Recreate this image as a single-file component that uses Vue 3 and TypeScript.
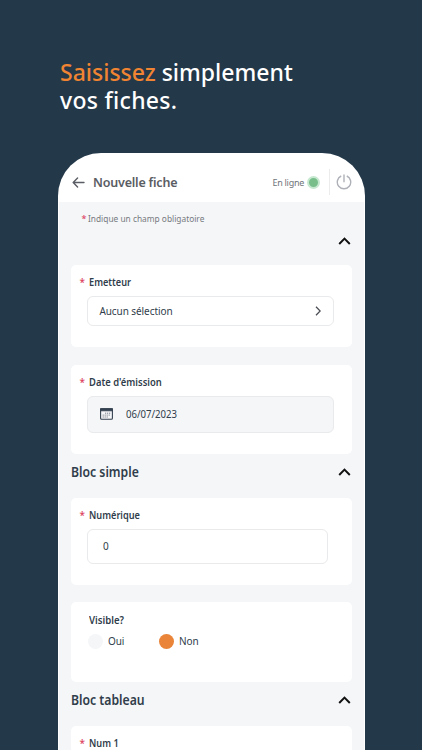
<script setup lang="ts">
import { ref } from 'vue'

const date = ref<string>('06/07/2023')
const amount = ref<number>(0)
const visible = ref<'Oui' | 'Non'>('Non')
const choices: Array<'Oui' | 'Non'> = ['Oui', 'Non']
</script>

<template>
  <main class="screen">
    <h1 class="headline"><span class="accent">Saisissez</span> simplement <span class="second">vos fiches.</span></h1>

    <div class="phone">
      <header class="topbar">
        <svg class="back" viewBox="0 0 14 12"><path d="M6 1 1.2 6 6 11M1.5 6H13" /></svg>
        <span class="title">Nouvelle fiche</span>
        <span class="status">En ligne</span>
        <i class="dot"></i>
        <span class="power">
          <svg viewBox="0 0 16 16"><path d="M5.2 2a6.7 6.7 0 1 0 5.6 0M8 .5v7.8" /></svg>
        </span>
      </header>

      <div class="content">
        <p class="hint"><b>*</b> <span>Indique un champ obligatoire</span></p>
        <div class="section first"><svg class="caret" viewBox="0 0 13 8"><path d="M1.2 7 6.5 1.6 11.8 7" /></svg></div>

        <section class="card emitter">
          <div class="label"><b>*</b><span>Emetteur</span></div>
          <div class="field select">
            <span class="placeholder">Aucun sélection</span>
            <svg class="chevron" viewBox="0 0 6 10"><path d="M1 .8 5.2 5 1 9.2" /></svg>
          </div>
        </section>

        <section class="card issue">
          <div class="label"><b>*</b><span class="l-date">Date d'émission</span></div>
          <div class="field date">
            <svg class="calendar" viewBox="0 0 13 12">
              <rect x=".6" y=".8" width="11.8" height="10.4" rx="1" />
              <path class="band" d="M.6.8h11.8v1.9H.6z" />
              <path class="days" d="M5 5.2h5.5M2.6 7.1h7.9M2.6 9h5.8" />
            </svg>
            <span class="day">{{ date }}</span>
          </div>
        </section>

        <div class="section"><h2>Bloc simple</h2><svg class="caret" viewBox="0 0 13 8"><path d="M1.2 7 6.5 1.6 11.8 7" /></svg></div>

        <section class="card numeric">
          <div class="label"><b>*</b><span>Numérique</span></div>
          <div class="field number">{{ amount }}</div>
        </section>

        <section class="card visible">
          <div class="label"><b></b><span class="l-vis">Visible?</span></div>
          <div class="choices">
            <button v-for="c in choices" :key="c" class="choice" :class="{ on: visible === c }" @click="visible = c">
              <i></i><span>{{ c }}</span>
            </button>
          </div>
        </section>

        <div class="section"><h2>Bloc tableau</h2><svg class="caret" viewBox="0 0 13 8"><path d="M1.2 7 6.5 1.6 11.8 7" /></svg></div>

        <section class="card table">
          <div class="label"><b>*</b><span>Num 1</span></div>
        </section>
      </div>
    </div>
  </main>
</template>

<style>
body { background: #233849; overflow: hidden; }
</style>

<style scoped>
* { box-sizing: border-box; }
.screen {
  height: 750px;
  overflow: hidden;
  background: #233849;
  font-family: "Noto Sans", "Open Sans", sans-serif;
  color: #303d4b;
  white-space: nowrap;
}
.headline {
  margin: 0;
  padding: 58px 0 0 60px;
  width: 310px;
  height: 153px;
  color: #fff;
  font-size: 23px;
  line-height: 28px;
  font-weight: 500;
  white-space: normal;
}
.accent { color: #f08432; }
.second { letter-spacing: .3px; }
.phone {
  width: 307px;
  height: 640px;
  margin-left: 58px;
  overflow: hidden;
  border-radius: 43px 43px 0 0;
  background: #fff;
}
.topbar {
  display: flex;
  align-items: center;
  height: 49px;
  padding: 9px 13px 0 14px;
}
svg { display: block; flex: none; fill: none; stroke: currentColor; }
.back { width: 13px; height: 11px; stroke-width: 1.5; stroke-linecap: round; stroke-linejoin: round; color: #5a5d63; }
.title { margin-left: 8px; font-size: 12.5px; font-weight: 600; letter-spacing: -.2px; color: #5a5d63; }
.status { margin-left: auto; font-size: 9px; letter-spacing: -.28px; color: #70747a; }
.dot { width: 13px; height: 13px; margin: 0 9px 0 3px; border: 2px solid #c6e8cf; border-radius: 50%; background: #78be8b; }
.power { display: flex; align-items: center; height: 26px; padding-left: 6px; border-left: 1px solid #ececee; }
.power svg { width: 16px; height: 16px; color: #aeb1b8; stroke-width: 1.4; }
.content { height: 591px; margin: 0 1px; padding: 0 12px 0 11.5px; background: #f5f6f8; }
.hint { display: flex; gap: 2px; margin: 0; padding: 10px 0 0 11px; height: 28px; font-size: 9px; line-height: 14px; color: #777a80; }
.hint span { transform: scaleX(.927); transform-origin: 0 50%; }
b { color: #dc4260; font-weight: 500; }
.section { display: flex; align-items: center; justify-content: space-between; height: 44px; padding: 0 1.5px 9px 0; }
.section.first { justify-content: flex-end; height: 35px; padding: 0 1.5px 15px 0; }
.caret { width: 13px; height: 8px; margin-top: 1px; color: #111; stroke-width: 2; }
h2 { margin: 0; font-size: 13.5px; line-height: 18px; font-weight: 600; transform: scaleX(.905); transform-origin: 0 50%; }
.card { width: 281px; padding: 10px 0 0 9px; border-radius: 5px; background: #fff; }
.emitter { height: 82px; margin-bottom: 18px; }
.issue { height: 89px; }
.numeric { height: 87px; margin-bottom: 17px; }
.visible { height: 80px; }
.table { height: 90px; }
.label { display: flex; height: 15px; font-size: 10px; line-height: 15px; font-weight: 600; }
.label b { width: 9.8px; font-size: 10px; }
.label span { transform: scaleX(.92); transform-origin: 0 50%; }
.label .l-date { transform: scaleX(.94); }
.label .l-vis { padding-top: 1px; transform: scaleX(.96); }
.field { display: flex; align-items: center; margin: 6px 0 0 7.9px; width: 247px; border: 1px solid #e9eaec; border-radius: 6px; font-size: 10px; }
.select { height: 30px; padding: 0 12px 0 11px; justify-content: space-between; }
.placeholder { letter-spacing: -.07px; }
.chevron { width: 6px; height: 10px; color: #4a4d53; stroke-width: 1.3; }
.date { height: 37px; padding: 0 0 1px 12px; background: #f5f6f8; }
.calendar { width: 13px; height: 12px; color: #354250; stroke-width: 1.1; }
.calendar .band { fill: currentColor; }
.calendar .days { stroke-dasharray: 1.2 .8; stroke-width: 1; opacity: .65; }
.day { margin-left: 13px; transform: scaleX(.96); transform-origin: 0 50%; }
.number { width: 241px; height: 35px; padding: 0 0 1px 14.5px; }
.choices { display: flex; margin: 6.5px 0 0 8px; }
.choice { display: flex; align-items: center; width: 71px; height: 15px; padding: 0; border: 0; background: none; font: inherit; font-size: 10px; letter-spacing: -.1px; color: inherit; }
.choice i { width: 15px; height: 15px; margin-right: 5.5px; border-radius: 50%; background: #f5f6f8; }
.choice.on i { background: #e98439; }
</style>
